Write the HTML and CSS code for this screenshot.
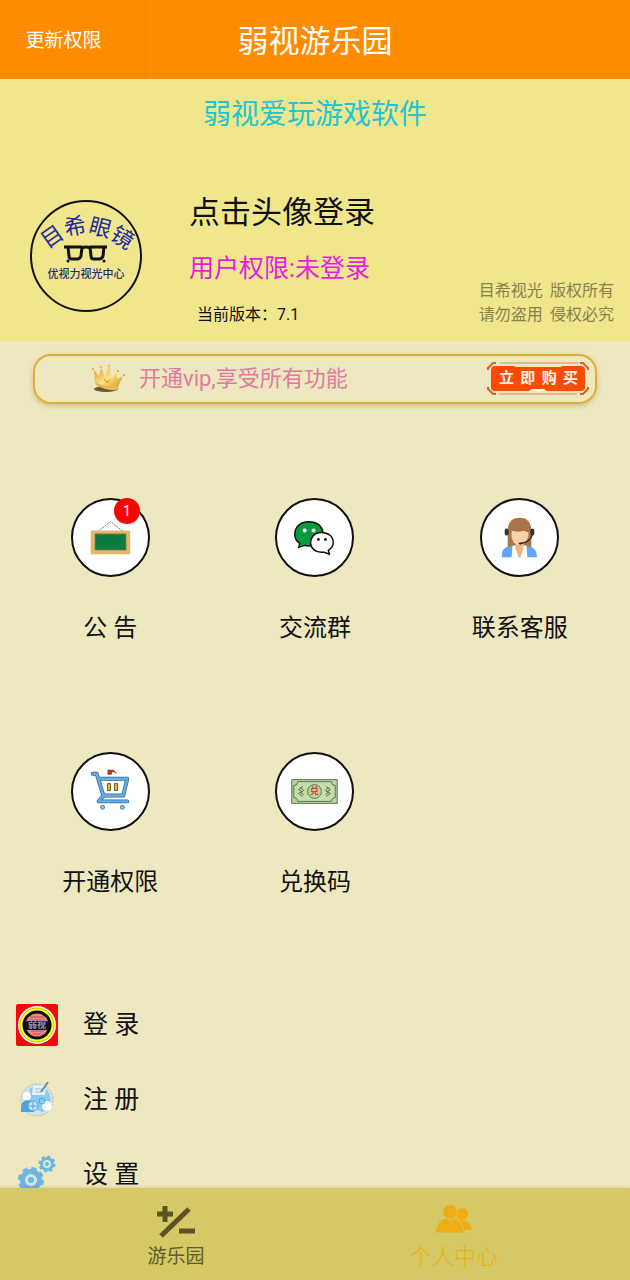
FILE: index.html
```html
<!DOCTYPE html>
<html lang="zh-CN">
<head>
  <meta charset="UTF-8">
  <meta name="viewport" content="width=device-width, initial-scale=1.0">
  <title>弱视游乐园</title>
  <link rel="stylesheet" href="styles.css">
</head>
<body>

  <header class="topbar">
    <button type="button" class="refresh">更新权限</button>
    <h1>弱视游乐园</h1>
  </header>

  <main class="content">
    <section class="profile">
      <p class="tagline">弱视爱玩游戏软件</p>
      <div class="profile-row">
        <button type="button" class="avatar" aria-label="登录">
          <svg viewBox="0 0 112 112">
            <defs>
              <path id="arc" d="M18 50 Q54 16 98 51"/>
            </defs>
            <circle cx="56" cy="56" r="55" fill="none" stroke="#111" stroke-width="2"/>
            <text class="arc-text"><textPath href="#arc">目希眼镜</textPath></text>
            <g fill="none" stroke="#111" stroke-width="3" stroke-linejoin="round">
              <path d="M38 47 H52 L51 56 Q50 59 47 59 H42 Q39 59 39 56 Z"/>
              <path d="M60 47 H74 L73 56 Q72 59 69 59 H64 Q61 59 61 56 Z"/>
              <path d="M34 47 H38 M52 48 Q56 46 60 48 M74 47 H77"/>
            </g>
            <circle cx="38" cy="61" r="1.500" fill="#111"/>
            <circle cx="74" cy="61" r="1.500" fill="#111"/>
            <text class="shop-text" x="56" y="78" text-anchor="middle">优视力视光中心</text>
          </svg>
        </button>
        <div class="user">
          <h2>点击头像登录</h2>
          <p class="role">用户权限:未登录</p>
          <p class="version">当前版本：7.1</p>
        </div>
        <p class="copyright">目希视光  版权所有
请勿盗用  侵权必究</p>
      </div>
    </section>

    <section class="vip">
      <svg class="crown" viewBox="0 0 34 28">
        <defs>
          <linearGradient id="gold" x1="0" y1="0" x2="1" y2="1">
            <stop offset="0" stop-color="#d9971c"/>
            <stop offset="0.500" stop-color="#fbe184"/>
            <stop offset="1" stop-color="#c98c16"/>
          </linearGradient>
        </defs>
        <ellipse cx="15" cy="24" rx="12" ry="3" fill="#6b5a30"/>
        <path d="M3 5 L8 11 L10 3 L14 12 L18 1 L21 13 L26 7 L26 14 L32 11 L26 24 Q14 25 4 18 Z" fill="url(#gold)"/>
        <path d="M4 17 Q14 23 27 21 L26 25 Q14 26 5 20 Z" fill="#e8b945"/>
        <circle cx="2" cy="4" r="1" fill="#d9a12c"/>
        <circle cx="10" cy="2" r="1" fill="#e4ae3c"/>
        <circle cx="18" cy="1" r="1" fill="#e4ae3c"/>
        <circle cx="27" cy="6" r="1" fill="#d9a12c"/>
        <circle cx="33" cy="10" r="1" fill="#d9a12c"/>
        <path d="M13 14 L16 18 L18 15" fill="none" stroke="#c8861b"/>
      </svg>
      <p>开通vip,享受所有功能</p>
      <button type="button" class="buy">
        <svg viewBox="0 0 102 34">
          <path d="M8 4 H26 L29 5 H73 L76 4 H94 Q98 4 98 8 V25 Q98 29 94 29 H8 Q4 29 4 25 V8 Q4 4 8 4 Z" fill="#fb4b05"/>
          <path d="M42 29 L45 27 H57 L60 29 Z" fill="#fff3e6"/>
          <path d="M1 8 V6 L6 1 H9 M93 1 H96 L101 6 V8 M1 25 V27 L6 32 H9 M93 32 H96 L101 27 V25" fill="none" stroke="#d9622b" stroke-width="2"/>
          <path d="M13 1 H92 M12 32 H90" stroke="#e08850"/>
        </svg>
        <span>立 即 购 买</span>
      </button>
    </section>

    <section class="menu">
      <a href="#notice">
        <span class="circle">
          <svg viewBox="0 0 80 80">
            <path d="M27 34 L40 24 L53 34" fill="none" stroke="#8d6464" stroke-dasharray="2 1"/>
            <rect x="20" y="33" width="40" height="24" fill="#e1b871"/>
            <rect x="24" y="36" width="32" height="17" fill="#8b672e"/>
            <rect x="25" y="37" width="30" height="15" fill="#087c43"/>
          </svg>
          <span class="badge">1</span>
        </span>
        公 告
      </a>
      <a href="#group">
        <span class="circle">
          <svg viewBox="0 0 80 80" stroke="#111" stroke-width="1.500">
            <path d="M34 24 C25 24 20 30 20 37 C20 41 22 44 25 46 L24 50 L30 48 Q34 49 38 48 L49 37 C48 28 42 24 34 24 Z" fill="#0a9a3f"/>
            <path d="M47 35 C40 35 36 40 36 45 C36 51 41 55 47 55 H50 L55 57 L54 53 C57 51 59 48 59 45 C59 39 54 35 47 35 Z" fill="#fff"/>
            <g stroke="none" fill="#fff"><circle cx="30" cy="33" r="2"/><circle cx="39" cy="33" r="2"/></g>
            <g stroke="none" fill="#111"><circle cx="44" cy="42" r="1.500"/><circle cx="51" cy="42" r="1.500"/></g>
          </svg>
        </span>
        交流群
      </a>
      <a href="#service">
        <span class="circle">
          <svg viewBox="0 0 80 80">
            <path d="M28 54 V34 Q28 20 40 20 Q52 20 52 34 V54 Z" fill="#a9754b"/>
            <path d="M22 60 Q22 50 29 49 H50 Q57 50 58 60 Z" fill="#62a5f4"/>
            <path d="M33 48 H47 L48 60 H32 Z" fill="#fff"/>
            <path d="M36 44 H44 V51 L41 60 H39 L36 51 Z" fill="#e8b58d"/>
            <path d="M32 33 Q41 36 49 31 V38 Q47 48 40 48 Q34 48 32 40 Z" fill="#ffd1a9"/>
            <path d="M31 34 Q37 30 39 27 Q42 33 50 35 Q49 24 40 23 Q31 23 31 34 Z" fill="#a9754b"/>
            <rect x="25" y="31" width="4" height="7" rx="2" fill="#333"/>
            <rect x="51" y="31" width="4" height="7" rx="2" fill="#333"/>
            <path d="M53 37 Q51 45 41 46" fill="none" stroke="#333" stroke-width="1.500"/>
            <ellipse cx="41" cy="46" rx="2" ry="1" fill="#222"/>
          </svg>
        </span>
        联系客服
      </a>
      <a href="#open">
        <span class="circle">
          <svg viewBox="0 0 80 80">
            <path d="M22 22 H26 L33 45 M28 27 H57 L53 44 H33 L28 50 H57" fill="none" stroke="#34688f" stroke-width="4" stroke-linejoin="round" stroke-linecap="round"/>
            <path d="M22 22 H26 L33 45 M28 27 H57 L53 44 H33 L28 50 H57" fill="none" stroke="#62aeea" stroke-width="2.500" stroke-linejoin="round" stroke-linecap="round"/>
            <path d="M37 23 V18 H43 L47 22 L42 20 L41 23 Z" fill="#a23935"/>
            <rect x="37" y="32" width="3" height="7" fill="#f2b739" stroke="#75602c"/>
            <rect x="44" y="32" width="3" height="7" fill="#f2b739" stroke="#75602c"/>
            <circle cx="32" cy="56" r="2" fill="#8ac6ef" stroke="#397caa"/>
            <circle cx="52" cy="56" r="2" fill="#8ac6ef" stroke="#397caa"/>
          </svg>
        </span>
        开通权限
      </a>
      <a href="#code">
        <span class="circle">
          <svg viewBox="0 0 80 80">
            <rect x="17" y="28" width="46" height="24" fill="#bad2a0" stroke="#577755"/>
            <path d="M23 30 H57 Q57 34 61 34 V46 Q57 46 57 50 H23 Q23 46 19 46 V34 Q23 34 23 30 Z" fill="#c9dda9" stroke="#577755"/>
            <circle cx="40" cy="40" r="7" fill="#bad2a0" stroke="#577755"/>
            <path d="M28 35 L24 38 L27 40 L24 42 L28 45 M26 36 L29 39 L26 41 L29 43 M52 35 L56 38 L53 40 L56 42 L52 45 M54 36 L51 39 L54 41 L51 43" fill="none" stroke="#49684a"/>
            <text class="note-text" x="40" y="43" text-anchor="middle">兑</text>
          </svg>
        </span>
        兑换码
      </a>
    </section>

    <nav class="list">
      <a href="#login">
        <svg viewBox="0 0 42 42">
          <rect width="42" height="42" rx="2" fill="#f40808"/>
          <circle cx="21" cy="21" r="19" fill="#fff"/>
          <circle cx="21" cy="21" r="17" fill="#ffff20" stroke="#c9b900"/>
          <circle cx="21" cy="21" r="13" fill="#ef8585" stroke="#080808" stroke-width="3"/>
          <path d="M13 16 H29 M14 13 H28 M15 27 H27 M17 30 H25" stroke="#b84e50"/>
          <rect x="9" y="17" width="24" height="9" rx="3" fill="#111"/>
          <text class="logo-text" x="21" y="24" text-anchor="middle">弱视</text>
        </svg>
        登 录
      </a>
      <a href="#register">
        <svg viewBox="0 0 42 42">
          <circle cx="21" cy="21" r="16" fill="#d4e6df" stroke="#b7c5b5" stroke-dasharray="3 1"/>
          <path d="M14 9 Q30 4 34 17 Q37 29 26 33 L12 27 Z" fill="#8ccbf1"/>
          <path d="M17 7 L30 6 L29 16 L16 16 Z" fill="#e6f1fb"/>
          <path d="M19 10 H26 M19 13 H25" stroke="#93bde1"/>
          <path d="M25 13 L32 3" stroke="#5b91bd" stroke-width="2"/>
          <path d="M5 33 Q4 22 11 21 Q17 21 18 33 Z" fill="#4ba3e3"/>
          <circle cx="11" cy="17" r="4" fill="#fff"/>
          <circle cx="17" cy="27" r="5" fill="#c6e5f7" stroke="#52a5da"/>
          <path d="M17 23 V31 M13 27 H21" stroke="#52a5da"/>
          <circle cx="31" cy="27" r="5" fill="#f5fbfd"/>
          <circle cx="26" cy="22" r="3" fill="none" stroke="#56a3db"/>
        </svg>
        注 册
      </a>
      <a href="#settings">
        <svg viewBox="0 0 42 42">
          <g fill="none" stroke="#6db5e3">
            <circle cx="15" cy="26" r="8" stroke-width="6"/>
            <circle cx="15" cy="26" r="11" stroke-width="4" stroke-dasharray="5 3.640"/>
            <circle cx="31" cy="10" r="5" stroke-width="4"/>
            <circle cx="31" cy="10" r="7" stroke-width="3" stroke-dasharray="3 2.500"/>
          </g>
          <circle cx="15" cy="26" r="6" fill="#d3e6da"/>
          <circle cx="15" cy="26" r="3" fill="#6db5e3"/>
          <circle cx="31" cy="10" r="4" fill="#d9e9d5"/>
          <circle cx="31" cy="10" r="2" fill="#6db5e3"/>
        </svg>
        设 置
      </a>
    </nav>
  </main>

  <nav class="tabs">
    <a href="#play">
      <svg viewBox="0 0 40 34">
        <path d="M1 9 H17 M9 1 V17 M23 26 H39" stroke="#5c5228" stroke-width="5"/>
        <path d="M5 31 L33 4" stroke="#5c5228" stroke-width="5"/>
      </svg>
      游乐园
    </a>
    <a href="#me" class="active">
      <svg viewBox="0 0 40 34">
        <circle cx="28" cy="9" r="6" fill="#eeae13"/>
        <path d="M24 15 Q36 14 38 25 H27 Z" fill="#eeae13"/>
        <circle cx="16" cy="7" r="7.500" fill="#eeae13" stroke="#d4c964"/>
        <path d="M1 28 Q3 15 12 13 Q17 16 21 13 Q28 17 31 28 Z" fill="#eeae13" stroke="#d4c964"/>
      </svg>
      个人中心
    </a>
  </nav>

</body>
</html>
```
FILE: styles.css
```css
* {
  box-sizing: border-box;
}

body {
  margin: 0;
  height: 100vh;
  display: flex;
  flex-direction: column;
  background-color: #eee8c0;
  color: #111;
  font-family: Roboto, "Noto Sans CJK SC", sans-serif;
}

h1, h2, p {
  margin: 0;
  font-weight: normal;
}

button {
  padding: 0;
  border: none;
  background: none;
  font-family: inherit;
  cursor: pointer;
}

a {
  color: inherit;
  text-decoration: none;
}

svg {
  display: block;
}

.topbar {
  display: grid;
  grid-template-columns: 146px 1fr 146px;
  grid-template-rows: 79px;
  flex-shrink: 0;
  background-color: #ff8c00;
  color: #fff;
}

.refresh {
  padding: 0 18px 2px 0;
  border-right: 1px solid #f58400;
  color: #fff;
  font-size: 19px;
}

.topbar h1 {
  font-size: 31px;
  line-height: 84px;
  text-align: center;
}

.content {
  flex: 1;
  min-height: 0;
  overflow-y: auto;
  scrollbar-width: none;
}

.profile {
  padding: 16px 16px 14px 30px;
  background-color: #f0e68c;
}

.tagline {
  color: #22c4d4;
  font-size: 28px;
  line-height: 40px;
  text-align: center;
  padding-right: 14px;
}

.profile-row {
  display: flex;
  align-items: flex-end;
  margin-top: 56px;
}

.avatar {
  width: 112px;
  height: 112px;
  margin-bottom: 15px;
}

.arc-text {
  fill: #1f2b9c;
  font-size: 22px;
}

.shop-text {
  fill: #1f2b7c;
  font-size: 11px;
  font-weight: 500;
}

.user {
  flex: 1;
  padding-left: 47px;
}

.user h2 {
  font-size: 31px;
  line-height: 44px;
}

.role {
  margin-top: 16px;
  color: #e81ce0;
  font-size: 25px;
  line-height: 36px;
}

.version {
  margin-top: 16px;
  padding-left: 8px;
  font-size: 16px;
  line-height: 24px;
}

.copyright {
  margin-bottom: 2px;
  color: #88814e;
  font-family: "Noto Sans CJK SC", sans-serif;
  font-size: 16px;
  line-height: 24px;
  white-space: pre;
}

.vip {
  display: flex;
  align-items: center;
  height: 50px;
  margin: 13px 33px 0;
  padding: 0 6px 0 56px;
  border: 2px solid #deae33;
  border-radius: 18px;
  box-shadow: 0 2px 5px rgba(120, 90, 40, 0.3);
}

.crown {
  width: 34px;
  height: 28px;
}

.vip p {
  flex: 1;
  padding-left: 14px;
  color: #e27aa0;
  font-size: 22px;
  line-height: 34px;
}

.buy {
  display: grid;
  width: 102px;
  height: 34px;
}

.buy svg, .buy span {
  grid-area: 1 / 1;
}

.buy span {
  padding: 0 11px 0 12px;
  color: #fff3e6;
  font-size: 15px;
  font-weight: bold;
  line-height: 32px;
  text-align-last: justify;
}

.menu {
  display: grid;
  grid-template-columns: repeat(3, 1fr);
  row-gap: 109px;
  margin-top: 94px;
  padding: 0 8px;
}

.menu a {
  display: flex;
  flex-direction: column;
  align-items: center;
  gap: 36px;
  font-size: 24px;
  line-height: 30px;
}

.circle {
  position: relative;
  width: 79px;
  height: 79px;
  border: 2px solid #111;
  border-radius: 50%;
  background-color: #fff;
}

.circle svg {
  width: 79px;
  height: 79px;
  margin: -2px;
}

.badge {
  position: absolute;
  top: -2px;
  right: 8px;
  width: 26px;
  height: 26px;
  border-radius: 50%;
  background-color: #f80606;
  color: #fff;
  font-size: 14px;
  line-height: 26px;
  text-align: center;
}

.note-text {
  fill: #e23b26;
  font-size: 9px;
  font-weight: bold;
}

.list {
  margin-top: 90px;
  padding-left: 16px;
}

.list a {
  display: flex;
  align-items: center;
  gap: 25px;
  height: 75px;
  font-size: 25px;
  line-height: 26px;
}

.list svg {
  width: 42px;
  height: 42px;
}

.logo-text {
  fill: #8f97b5;
  font-size: 9px;
  font-weight: bold;
}

.tabs {
  display: grid;
  grid-template-columns: 1fr 1fr;
  height: 92px;
  flex-shrink: 0;
  padding: 17px 37px 0;
  background-color: #d4c964;
  box-shadow: 0 -1px 3px rgba(120, 100, 40, 0.2);
}

.tabs a {
  display: flex;
  flex-direction: column;
  align-items: center;
  gap: 3px;
  color: #625a2d;
  font-size: 19px;
  line-height: 30px;
}

.tabs svg {
  width: 40px;
  height: 34px;
}

.tabs .active {
  color: #eeae13;
  font-size: 22px;
  font-weight: 300;
}
```
